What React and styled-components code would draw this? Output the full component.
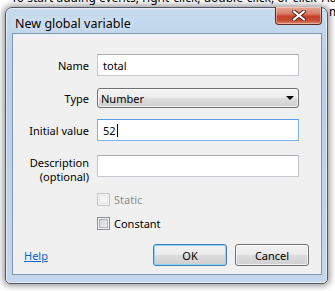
import styled, { createGlobalStyle } from "styled-components";

const Global = createGlobalStyle`
  html, body {
    margin: 0;
    padding: 0;
    background: #ffffff;
    overflow: hidden;
  }
  body {
    font-family: "Noto Sans", "Open Sans", sans-serif;
    font-size: 11px;
    color: #000000;
  }
`;

const Desktop = styled.div`
  position: relative;
  width: 335px;
  height: 291px;
  overflow: hidden;
  background: #ffffff;
`;

const BackText = styled.div`
  margin-top: -9px;
  padding-left: 11px;
  font-size: 12px;
  line-height: 14px;
  white-space: nowrap;
  color: #000000;
`;

const BackLine = styled.div`
  text-indent: ${(p) => p.$indent || 0}px;
`;

const Window = styled.div`
  position: absolute;
  left: 5px;
  top: 7px;
  width: 323px;
  height: 277px;
  box-sizing: border-box;
  border: 1px solid #4d5a66;
  border-radius: 7px 7px 5px 5px;
  background: linear-gradient(180deg, #c9dcef 0%, #bcd2ea 14%, #b7cfe9 30%, #c3d7ee 100%);
  box-shadow: 0 0 6px 2px rgba(0, 0, 0, 0.4), inset 0 0 0 1px rgba(255, 255, 255, 0.55);
  display: flex;
  flex-direction: column;
  padding: 0 5px 8px 6px;
`;

const TitleBar = styled.div`
  height: 25px;
  box-sizing: border-box;
  display: flex;
  align-items: center;
  padding: 5px 0 0 3px;
  font-size: 12.5px;
  color: #000000;
  text-shadow: 0 0 6px rgba(255, 255, 255, 0.9);
`;

const CloseButton = styled.div`
  position: absolute;
  top: -1px;
  right: 5px;
  width: 47px;
  height: 18px;
  box-sizing: border-box;
  border: 1px solid #5c2a22;
  border-top: none;
  border-radius: 0 0 4px 4px;
  background: linear-gradient(180deg, #e8a899 0%, #d97a66 40%, #c4412a 55%, #c84e36 80%, #df8a6f 100%);
  box-shadow: inset 0 0 0 1px rgba(255, 220, 210, 0.5);
  display: flex;
  align-items: center;
  justify-content: center;
`;

const Client = styled.div`
  flex: 1;
  background: #f0f0f0;
  border: 1px solid #7f97b1;
  display: flex;
  flex-direction: column;
  padding: 0 12px 0 0;
`;

const Row = styled.div`
  display: flex;
  align-items: ${(p) => (p.$top ? "flex-start" : "center")};
  margin-top: ${(p) => p.$mt}px;
  height: ${(p) => p.$h || 22}px;
`;

const Label = styled.div`
  width: 76px;
  margin-right: 8px;
  text-align: right;
  line-height: ${(p) => (p.$top ? 14 : 13)}px;
  padding-top: ${(p) => (p.$top ? 1 : 0)}px;
`;

const TextBox = styled.div`
  width: 202px;
  height: 22px;
  box-sizing: border-box;
  background: #ffffff;
  border: 1px solid ${(p) => (p.$focus ? "#7eb4ea" : "#c5c9cf")};
  border-top-color: ${(p) => (p.$focus ? "#569de5" : "#abadb3")};
  padding-left: 5px;
  display: flex;
  align-items: center;
`;

const Caret = styled.span`
  display: inline-block;
  width: 1px;
  height: 13px;
  background: #000000;
  margin-left: 1px;
`;

const Combo = styled.div`
  width: 202px;
  height: 20px;
  box-sizing: border-box;
  border: 1px solid #707070;
  border-radius: 3px;
  background: linear-gradient(180deg, #f2f2f2 0%, #ebebeb 50%, #dddddd 50%, #cfcfcf 100%);
  box-shadow: inset 0 0 0 1px rgba(255, 255, 255, 0.7);
  display: flex;
  align-items: center;
  justify-content: space-between;
  padding: 0 4px 0 3px;
`;

const Arrow = styled.span`
  width: 0;
  height: 0;
  border-left: 4px solid transparent;
  border-right: 4px solid transparent;
  border-top: 4px solid #000000;
`;

const CheckRow = styled.div`
  display: flex;
  align-items: center;
  margin-top: ${(p) => p.$mt}px;
  margin-left: 84px;
  height: 13px;
  color: ${(p) => (p.$disabled ? "#8d8d8d" : "#000000")};
`;

const Box = styled.span`
  width: 13px;
  height: 13px;
  box-sizing: border-box;
  margin-right: 4px;
  border: 1px solid ${(p) => (p.$disabled ? "#c4c4c4" : "#8e8f8f")};
  background: ${(p) =>
    p.$disabled
      ? "#f4f4f4"
      : "linear-gradient(135deg, #cbcfd5 0%, #dfe1e5 50%, #f4f4f6 100%)"};
  box-shadow: inset 0 0 0 1px #f4f4f4,
    inset 0 0 0 2px ${(p) => (p.$disabled ? "#e6e6e6" : "#aeb3b9")};
`;

const Footer = styled.div`
  display: flex;
  align-items: center;
  margin-top: 14px;
  padding-left: 11px;
  height: 22px;
`;

const HelpLink = styled.a`
  color: #0066cc;
  text-decoration: underline;
  cursor: pointer;
  margin-right: auto;
`;

const Button = styled.div`
  width: 74px;
  height: 22px;
  box-sizing: border-box;
  margin-left: ${(p) => p.$ml || 0}px;
  border: 1px solid ${(p) => (p.$default ? "#3c7fb1" : "#707070")};
  border-radius: 3px;
  background: linear-gradient(180deg, #f2f2f2 0%, #ebebeb 50%, #dddddd 50%, #cfcfcf 100%);
  box-shadow: inset 0 0 0 1px ${(p) => (p.$default ? "#8fd4f6" : "rgba(255,255,255,0.7)")};
  display: flex;
  align-items: center;
  justify-content: center;
`;

export default function App() {
  return (
    <Desktop>
      <Global />
      <BackText>
        <BackLine>To start adding events, right-click, double-click, or click 'Add event'</BackLine>
        <BackLine $indent={318}>menu</BackLine>
      </BackText>
      <Window>
        <TitleBar>New global variable</TitleBar>
        <CloseButton>
          <svg width="14" height="11" viewBox="0 0 14 11">
            <path
              d="M2 1.5 L12 9.5 M12 1.5 L2 9.5"
              stroke="#4a2620"
              strokeWidth="4"
              strokeLinecap="square"
            />
            <path
              d="M2 1.5 L12 9.5 M12 1.5 L2 9.5"
              stroke="#ffffff"
              strokeWidth="2"
              strokeLinecap="square"
            />
          </svg>
        </CloseButton>
        <Client>
          <Row $mt={20}>
            <Label>Name</Label>
            <TextBox>total</TextBox>
          </Row>
          <Row $mt={12} $h={20}>
            <Label>Type</Label>
            <Combo>
              <span>Number</span>
              <Arrow />
            </Combo>
          </Row>
          <Row $mt={11}>
            <Label>Initial value</Label>
            <TextBox $focus>
              52
              <Caret />
            </TextBox>
          </Row>
          <Row $mt={14} $h={29} $top>
            <Label $top>
              Description
              <br />
              (optional)
            </Label>
            <TextBox />
          </Row>
          <CheckRow $mt={9} $disabled>
            <Box $disabled />
            Static
          </CheckRow>
          <CheckRow $mt={11}>
            <Box />
            Constant
          </CheckRow>
          <Footer>
            <HelpLink>Help</HelpLink>
            <Button $default>OK</Button>
            <Button $ml={8}>Cancel</Button>
          </Footer>
        </Client>
      </Window>
    </Desktop>
  );
}
